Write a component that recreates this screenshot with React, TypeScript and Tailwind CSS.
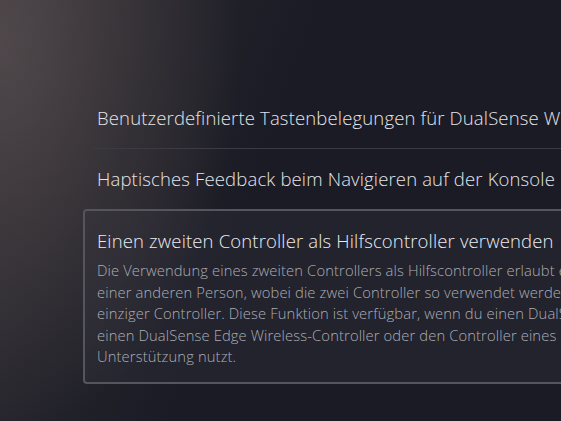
export default function App() {
  const lines = [
    "Die Verwendung eines zweiten Controllers als Hilfscontroller erlaubt es dir, ein Spiel gemeinsam mit",
    "einer anderen Person, wobei die zwei Controller so verwendet werden, als wären sie ein",
    "einziger Controller. Diese Funktion ist verfügbar, wenn du einen DualSense Wireless-Controller,",
    "einen DualSense Edge Wireless-Controller oder den Controller eines Spiels mit",
    "Unterstützung nutzt.",
  ];

  return (
    <div
      className="relative h-[421px] w-[561px] overflow-hidden bg-[#1a1b25] text-[#e2e2e8]"
      style={{ fontFamily: '"Open Sans", "Noto Sans", sans-serif' }}
    >
      {/* warm glow top-left */}
      <div className="pointer-events-none absolute inset-0 bg-[radial-gradient(ellipse_320px_520px_at_0%_10%,#5c5254_0%,#3b363a_35%,transparent_75%)]" />
      <div className="pointer-events-none absolute inset-0 bg-[linear-gradient(110deg,rgba(70,64,68,0.55)_0%,rgba(52,49,54,0.38)_25%,transparent_45%)]" />

      <div className="relative flex w-[900px] flex-col pl-[83px] pt-[101px]">
        <div className="ml-[11px] whitespace-nowrap pl-[3px] text-[18.5px] font-light leading-[34px] tracking-[0.15px] text-[#e4e4ea]">
          Benutzerdefinierte Tastenbelegungen für DualSense Wireless-Controller
        </div>
        <div className="ml-[10px] mt-[13px] border-t border-[#3a3b45]" />
        <div className="ml-[11px] mt-[13px] whitespace-nowrap pl-[3px] text-[18.5px] font-light leading-[34px] tracking-[0.15px] text-[#e4e4ea]">
          Haptisches Feedback beim Navigieren auf der Konsole
        </div>

        <div className="mt-[13px] rounded-[4px] border-2 border-[#55555d] bg-[rgba(60,60,70,0.25)] px-[12px] pb-[14px] pt-[17px]">
          <div className="whitespace-nowrap text-[18.5px] font-light leading-[26px] tracking-[0.15px] text-[#ececf0]">
            Einen zweiten Controller als Hilfscontroller verwenden
          </div>
          <div className="mt-[6px] text-[14.75px] font-light leading-[21.6px] tracking-[0.12px] text-[#acacb4]">
            {lines.map((l) => (
              <div key={l} className="whitespace-nowrap">
                {l}
              </div>
            ))}
          </div>
        </div>
      </div>
    </div>
  );
}
